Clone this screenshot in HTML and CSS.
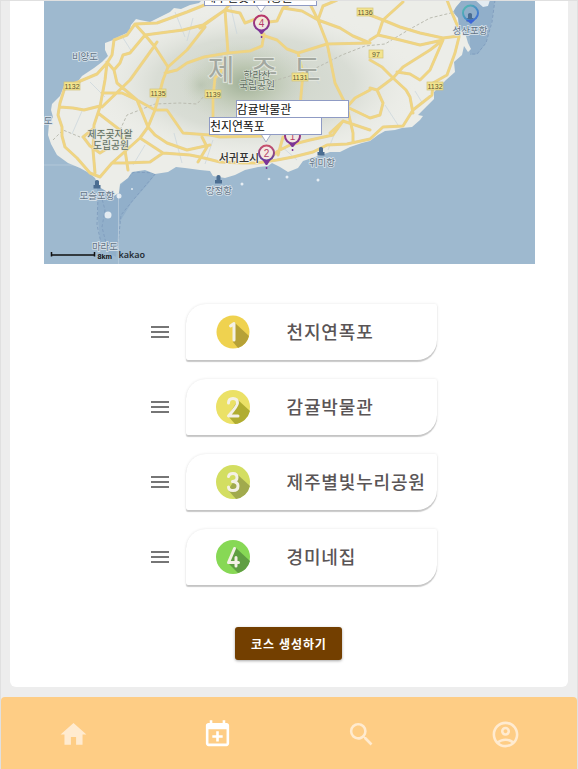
FILE: index.html
```html
<!DOCTYPE html>
<html lang="ko">
<head>
<meta charset="utf-8">
<title>코스 생성하기</title>
<link rel="stylesheet" href="styles.css">
</head>
<body>
<div class="app">
<main class="panel">
<section class="map">
<svg class="map-canvas" viewBox="44 1 491 264">
<defs>
<radialGradient id="forest"><stop offset="0" stop-color="#9faf96"/><stop offset=".35" stop-color="#b6c2ab" stop-opacity=".9"/><stop offset="1" stop-color="#ccd3c4" stop-opacity="0"/></radialGradient>
<radialGradient id="upland"><stop offset="0" stop-color="#ccd3c7"/><stop offset=".6" stop-color="#d9ddd5"/><stop offset="1" stop-color="#ecede8" stop-opacity="0"/></radialGradient>
<linearGradient id="pin" x2="0" y2="1"><stop offset="0" stop-color="#b93567"/><stop offset="1" stop-color="#7c3597"/></linearGradient>
<linearGradient id="pin2" x2="0" y2="1"><stop offset="0" stop-color="#c94f6b"/><stop offset="1" stop-color="#5a3fa0"/></linearGradient>
<linearGradient id="pin3" x2="1" y2="1"><stop offset="0" stop-color="#55bfae"/><stop offset="1" stop-color="#3c66d8"/></linearGradient>
<clipPath id="coast"><path id="land" d="M202 0L199 3 190 5 181 9 174 8 170 12 160 17 150 22 140 20 136 19 131 25 129 32 120 36 113 40 105 43 105 50 108 56 102 62 94 68 82 76 76 84 64 86 60 96 52 104 51 110 53 117 49 124 48 135 51 144 57 155 68 163 80 168 89 173 95 178 99 187 106 191 112 197 119 193 120 184 128 178 132 172 145 170 155 174 168 172 176 167 185 168 200 170 210 171 213 176 225 178 235 175 245 170 258 167 268 166 272 163 280 167 288 172 298 168 303 161 318 156 330 152 340 152 350 147 362 143 370 141 378 135 385 131 395 130 402 128 412 127 420 120 423 116 418 115 427 106 434 99 434 92 440 86 446 80 455 72 454 62 462 55 464 46 468 52 471 49 468 43 466 36 459 28 458 18 453 12 456 7 462 0Z"/></clipPath>
</defs>
<path fill="#9eb9cf" d="M44 0H535V264H44Z"/>
<path d="M97 188L98 220 101 248 116 257 119 223 132 202 148 184 158 171 133 172 119 187ZM452 0H495L492 20 486 43 478 54 470 55 470 38 455 20Z" fill="#91afca"/>
<path d="M98 197L97 225 102 247M101 195L105 210 102 227 106 243M118 244L121 215 134 199 156 173 134 172 127 178M495 0L492 22 486 43 477 54 470 54" fill="none" stroke="#7f9cbd" stroke-width=".9" stroke-dasharray="3 2"/>
<path d="M44 165H90M118.500 190V264" stroke="#b7cadb" stroke-width=".8"/>
<use href="#land" fill="#ecede8"/>
<g clip-path="url(#coast)">
<ellipse cx="255" cy="84" rx="165" ry="78" fill="url(#upland)"/>
<ellipse cx="245" cy="83" rx="65" ry="42" fill="url(#forest)"/>
<ellipse cx="201" cy="85" rx="18" ry="18" fill="url(#forest)" opacity=".35"/>
<path d="M118 30l14 22M175 12l10 25M145 145l-12 20M230 4l7 30M305 64l14 20M336 130l-8 20M385 105l13 20M415 91l8 13M90 82l15 15M82 111l-10 23M193 18l-6 23M280 145l17 15M174 133l8 30M213 140l-8 24" fill="none" stroke="#c8d4db" stroke-width=".7"/>
</g>
<path d="M53 140L63 130 80 137M120 130L127 115 155 104 180 103 197 104 205 95M264 84L290 76 316 68 342 55 365 46 385 44 410 29 430 18 455 12" fill="none" stroke="#bbbcb1" stroke-width="1" stroke-dasharray="3 2"/>
<g fill="none" stroke="#e6d196" stroke-width="3" stroke-linejoin="round" stroke-linecap="round">
<path id="road-lines" d="M207 4L187 12 157 23 135 24 127 35 114 40 112 55 107 63 97 74 78 82 65 87 60 103 58 115 62 127 62 136 65 147 77 158 90 173 100 177 112 163 125 163 150 162 163 153 190 155 200 157 220 162 243 163 257 163 277 160 293 157 313 152 327 145 347 144 370 139 383 127 403 126 413 110 432 95 433 83 447 75 455 53 459 37 458 27 452 13 447 0
M135 24L145 35 155 47 168 67 163 80 155 110 148 127 140 138 112 163M145 35L160 33 183 30 203 25 225 10M145 35L130 53 123 55 120 63 114 70 107 62M157 42L153 48 130 80 102 107M205 27L187 50 168 67M165 73L177 70 187 63 204 57 228 53M107 63L105 80 100 107 94 125 93 150 95 173M114 70L117 83 137 100 148 127M122 93L137 100 155 110 167 110 183 133 210 135 220 137 267 136M60 107L73 108 84 110 100 106M98 113L120 130 125 150 128 170M102 93L122 93M140 138L163 153M148 127L155 135 167 143 187 150 210 145M202 137L207 147 198 162M200 28L225 10 233 0M225 10L228 53 250 51 262 46 264 34M225 10L240 13 245 23 258 18 269 22 277 21 283 8 298 0M283 8L302 11 318 20 340 28 353 36 370 43M308 0L318 20 323 6 337 0M318 20L327 43 335 83 347 107 370 118M262 35L277 40 287 49 298 53 327 44 370 43M298 53L303 73 300 107M226 57L221 72 215 78 213 97 213 117M347 107L355 98 370 90M347 107L353 133 353 142M330 133L343 121 370 130M270 158L278 151 290 145 310 140 333 135 343 121M278 155L283 137M370 15L383 20 403 2M383 20L400 27 410 30 420 33 443 38 459 36M383 20L378 35 370 40M378 35L400 40 420 45 443 40 430 50 403 67 393 78 382 67 370 60M443 40L430 70 420 80 410 74 397 72M393 78L406 90 410 97 413 113M393 78L377 90 370 88M377 90L383 103 380 115 370 118M83 137L93 129M84 138L90 146 100 153 108 148"/>
</g>
<use href="#road-lines" fill="none" class="road-center"/>
<g fill="#fff" opacity=".75"><circle cx="108" cy="215" r="3.500"/><circle cx="132" cy="189" r="1"/><circle cx="119" cy="196" r="2.500"/><circle cx="242" cy="184" r="1.500"/><circle cx="269" cy="179" r="1.300"/><circle cx="287" cy="177" r="1.500"/><circle cx="318" cy="180" r="1.500"/><path d="M475 0H490L488 6 483 7Z"/></g>
<g class="big-label"><text x="221" y="81">제</text><text x="264" y="81">주</text><text x="307" y="81">도</text></g>
<g class="road-tags"><rect x="64" y="82" width="16" height="8"/><text x="72" y="89">1132</text><rect x="150" y="89" width="16" height="8"/><text x="158" y="96">1135</text><rect x="205" y="90" width="16" height="8"/><text x="213" y="97">1139</text><rect x="292" y="73" width="16" height="8"/><text x="300" y="80">1131</text><rect x="357" y="8" width="16" height="8"/><text x="365" y="15">1136</text><rect x="369" y="50" width="14" height="8"/><text x="376" y="57">97</text><rect x="427" y="82" width="16" height="8"/><text x="435" y="89">1132</text></g>
<g class="place"><text x="85" y="60">비양도</text><text x="48" y="124">도</text><text x="97" y="199">모슬포항</text><text x="105" y="250">마라도</text><text x="219" y="194">강정항</text><text x="322" y="165.500">위미항</text><text x="470" y="34">성산포항</text></g>
<g class="place park"><text x="110" y="138">제주곶자왈</text><text x="111" y="149">도립공원</text><text x="257" y="79">한라산</text><text x="257" y="89">국립공원</text></g>
<text class="city" x="239" y="161.500">서귀포시</text>
<g fill="#4b6d91"><path id="port" d="M93.500 188.500v-3.500h1.500v-2q-.5-3 2-3t2 3v2h1.500v3.500z"/><use href="#port" x="121.500" y="-5"/><use href="#port" x="224" y="-33"/><use href="#port" x="373" y="-167"/></g>
<g class="pins"><g stroke="url(#pin)"><circle cx="261.500" cy="23" r="7.500"/><circle cx="292.500" cy="136" r="7.500"/></g><circle cx="266.500" cy="153" r="7.500" stroke="url(#pin2)"/><circle cx="470.500" cy="13" r="7.500" class="clear" stroke="url(#pin3)"/></g>
<path d="M257.500 30h8l-3.300 4h-1.400zM260.800 36h1.500v2h-1.500zM288.500 143h8l-3.300 4h-1.400zM291.800 149h1.500v2h-1.500zM262.500 160h8l-3.300 5h-1.400zM265.800 167h1.500v2h-1.500z" fill="#7c3597"/><path d="M466 20h9l-4 4z" fill="#3c66d8"/>
<g class="pin-number"><text x="261.500" y="27">4</text><text x="292.500" y="140">1</text><text x="266.500" y="157">2</text></g>
<path d="M256 5L261 12 266 5M261 134L266 142 271 134" fill="#fff" stroke="#949ebd" stroke-width=".8"/>
<path d="M51.500 252V256.500M51 255H95M94.500 252V256.500" fill="none" stroke="#111" stroke-width="1.500"/>
<text class="scale" x="97.500" y="259">8km</text><text class="brand" x="118.500" y="258">kakao</text>
</svg>
<div class="tip tip-top">제주별빛누리공원</div><div class="tip tip-museum">감귤박물관</div><div class="tip tip-falls">천지연폭포</div>
</section>
<ol class="course">
<li class="stop"><svg class="handle" viewBox="0 0 24 24"><path d="M3 18h18v-2H3v2zm0-5h18v-2H3v2zm0-7v2h18V6H3z"/></svg><div class="place-card"><svg class="badge" viewBox="0 0 34 34"><circle class="gold" cx="17" cy="17" r="16.500"/><path class="gold-shade" d="M19 8L33 21A17 17 0 0 1 22 33L17 27Z"/><path class="digit" d="M14.500 11L18 8.500V25"/></svg><span>천지연폭포</span></div></li>
<li class="stop"><svg class="handle" viewBox="0 0 24 24"><path d="M3 18h18v-2H3v2zm0-5h18v-2H3v2zm0-7v2h18V6H3z"/></svg><div class="place-card"><svg class="badge" viewBox="0 0 34 34"><circle class="yellow" cx="17" cy="17" r="17"/><path class="yellow-shade" d="M22 10L34 21A17 17 0 0 1 19 34L12 26Z"/><path class="digit" d="M12.500 13Q12.500 8.500 17 8.500Q21.500 8.500 21.500 13Q21.500 16 12.500 26H22"/></svg><span>감귤박물관</span></div></li>
<li class="stop"><svg class="handle" viewBox="0 0 24 24"><path d="M3 18h18v-2H3v2zm0-5h18v-2H3v2zm0-7v2h18V6H3z"/></svg><div class="place-card"><svg class="badge" viewBox="0 0 34 34"><circle class="lime" cx="17" cy="17" r="17"/><path class="lime-shade" d="M22 10L34 21A17 17 0 0 1 20 34L12 25Z"/><path class="digit" d="M12.500 11.500Q13 8.500 17 8.500Q21 8.500 21 12.500Q21 16 16.500 16.500Q22 17 22 21Q22 25.500 17 25.500Q12.500 25.500 12.500 22"/></svg><span>제주별빛누리공원</span></div></li>
<li class="stop"><svg class="handle" viewBox="0 0 24 24"><path d="M3 18h18v-2H3v2zm0-5h18v-2H3v2zm0-7v2h18V6H3z"/></svg><div class="place-card"><svg class="badge" viewBox="0 0 34 34"><circle class="green" cx="17" cy="17" r="17"/><path class="green-shade" d="M20 8L34 21A17 17 0 0 1 22 33L12 23Z"/><path class="digit" d="M18.500 8.500L12.500 22.500H22.500M20 17.500V26"/></svg><span>경미네집</span></div></li>
</ol>
<button class="create">코스 생성하기</button>
</main>
<nav class="tabs">
<a><svg viewBox="0 0 24 24"><path d="M10 20v-6h4v6h5v-8h3L12 3 2 12h3v8z"/></svg></a>
<a class="active"><svg viewBox="0 0 24 24"><path d="M19 3h-1V1h-2v2H8V1H6v2H5c-1.100 0-2 .9-2 2v14c0 1.100.9 2 2 2h14c1.100 0 2-.9 2-2V5c0-1.100-.9-2-2-2zm0 16H5V8h14v11zM11 9.500h2v3h3v2h-3v3h-2v-3H8v-2h3z"/></svg></a>
<a><svg viewBox="0 0 24 24"><path d="M15.500 14h-.79l-.28-.27A6.471 6.471 0 0 0 16 9.500 6.500 6.500 0 1 0 9.500 16c1.610 0 3.090-.59 4.230-1.570l.27.28v.79l5 4.990L20.490 19l-4.990-5zm-6 0C7.010 14 5 11.990 5 9.500S7.010 5 9.500 5 14 7.010 14 9.500 11.990 14 9.500 14z"/></svg></a>
<a><svg viewBox="0 0 24 24"><path d="M12 2C6.480 2 2 6.480 2 12s4.480 10 10 10 10-4.480 10-10S17.520 2 12 2zM7.350 18.500C8.660 17.560 10.260 17 12 17s3.340.56 4.650 1.500C15.340 19.440 13.740 20 12 20s-3.340-.56-4.650-1.500zm10.790-1.380C16.450 15.800 14.320 15 12 15s-4.450.8-6.140 2.120C4.700 15.730 4 13.950 4 12c0-4.420 3.580-8 8-8s8 3.580 8 8c0 1.950-.7 3.730-1.860 5.120zM12 6c-1.930 0-3.500 1.570-3.500 3.500S10.070 13 12 13s3.500-1.570 3.500-3.500S13.930 6 12 6zm0 5c-.83 0-1.500-.67-1.500-1.500S11.170 8 12 8s1.500.67 1.500 1.500S12.830 11 12 11z"/></svg></a>
</nav>
</div>
</body>
</html>
```
FILE: styles.css
```css
* { box-sizing: border-box; }
body {
  margin: 0;
  font-family: "Liberation Sans", "Noto Sans CJK KR", sans-serif;
}
.app {
  height: 769px;
  overflow: hidden;
  background: #ededed;
  border: 1px solid #e0e0e0;
  border-bottom: 0;
}
.panel {
  height: 686px;
  margin: 0 9px 10px;
  background: #fff;
  border-radius: 0 0 6px 6px;
}
.map {
  position: relative;
  width: 491px;
  height: 264px;
  margin-left: 34px;
  overflow: hidden;
}
.map-canvas { display: block; width: 491px; height: 264px; }
.map text { font-family: "Liberation Sans", "Noto Sans CJK KR", sans-serif; }
.road-center { stroke: #f0d580; stroke-width: 2; stroke-linejoin: round; stroke-linecap: round; }
.road-tags rect { fill: #f3e48e; stroke: #d3c475; stroke-width: .7; }
.road-tags text { font-size: 7px; fill: #5c5636; text-anchor: middle; }
.big-label text { font-size: 29px; text-anchor: middle; fill: #a3a8a0; stroke: #e2e6de; stroke-width: 2; paint-order: stroke; }
.place text { font-size: 9.5px; text-anchor: middle; fill: #617386; stroke: #dce5ec; stroke-width: 1.5; paint-order: stroke; }
.place.park text { font-size: 9.8px; fill: #5c6b5d; stroke: #dde2d8; stroke-width: 1.2; }
.map .city { font-size: 11px; font-weight: 500; text-anchor: middle; fill: #333; stroke: #f4f4ee; stroke-width: 1.5; paint-order: stroke; }
.pins circle { fill: #f5e8e2; fill-opacity: .8; stroke-width: 2; }
.pins .clear { fill: none; }
.pin-number text { font-size: 10px; text-anchor: middle; fill: #b53d66; }
.scale { font-size: 7.3px; font-weight: bold; fill: #111; }
.map .brand { font-family: "Noto Sans", sans-serif; font-size: 9px; font-weight: 600; fill: #252d35; }
.tip {
  position: absolute;
  width: 113px;
  height: 18px;
  border: 1px solid #8f9bc4;
  background: #fff;
  color: #111;
  font-size: 12px;
  letter-spacing: -.1px;
  line-height: 18px;
  white-space: nowrap;
}
.tip-top { left: 160px; top: -13px; }
.tip-museum { left: 191.5px; top: 99px; }
.tip-falls { left: 165px; top: 116px; }
.course {
  display: flex;
  flex-direction: column;
  gap: 19px;
  width: 289px;
  margin: 39px 0 0 138px;
  padding: 0;
  list-style: none;
}
.stop { display: flex; align-items: center; gap: 14px; height: 56px; }
.handle { width: 24px; height: 24px; flex: none; fill: #767676; }
.place-card {
  display: flex;
  align-items: center;
  width: 251px;
  height: 56px;
  flex: none;
  padding-left: 30px;
  border-radius: 20px 2px 20px 2px;
  background: #fff;
  box-shadow: 0 1.5px 1px rgba(0, 0, 0, .2), 0 0 3px rgba(0, 0, 0, .1);
  color: #5a5556;
  font-size: 18px;
  font-weight: 500;
  letter-spacing: .85px;
  white-space: nowrap;
}
.place-card span { padding-bottom: 3px; }
.badge { width: 34px; height: 34px; margin-right: 36.5px; flex: none; }
.digit { fill: none; stroke: #f4f1e6; stroke-width: 3; stroke-linecap: round; stroke-linejoin: round; }
.gold { fill: #efd24f; }
.gold-shade { fill: #b6a137; }
.yellow { fill: #ebe166; }
.yellow-shade { fill: #b0ad31; }
.lime { fill: #d3de61; }
.lime-shade { fill: #a1aa4d; }
.green { fill: #87d855; }
.green-shade { fill: #5f9e42; }
.create {
  display: block;
  width: 107px;
  height: 33px;
  margin: 42.4px 0 0 225.4px;
  padding: 0;
  border: 0;
  border-radius: 3px;
  background: #733f00;
  box-shadow: 0 1px 3px rgba(0, 0, 0, .35);
  color: #fff;
  font: bold 12px "Noto Sans CJK KR", sans-serif;
  letter-spacing: .85px;
}
.tabs {
  display: grid;
  grid-template-columns: repeat(4, 1fr);
  height: 72px;
  padding: 22px 0 0;
  border-radius: 4px 4px 0 0;
  background: #fecd85;
}
.tabs a { display: flex; justify-content: center; color: #ffebd0; }
.tabs .active { color: #fff; }
.tabs svg { width: 31px; height: 31px; fill: currentColor; }
```
